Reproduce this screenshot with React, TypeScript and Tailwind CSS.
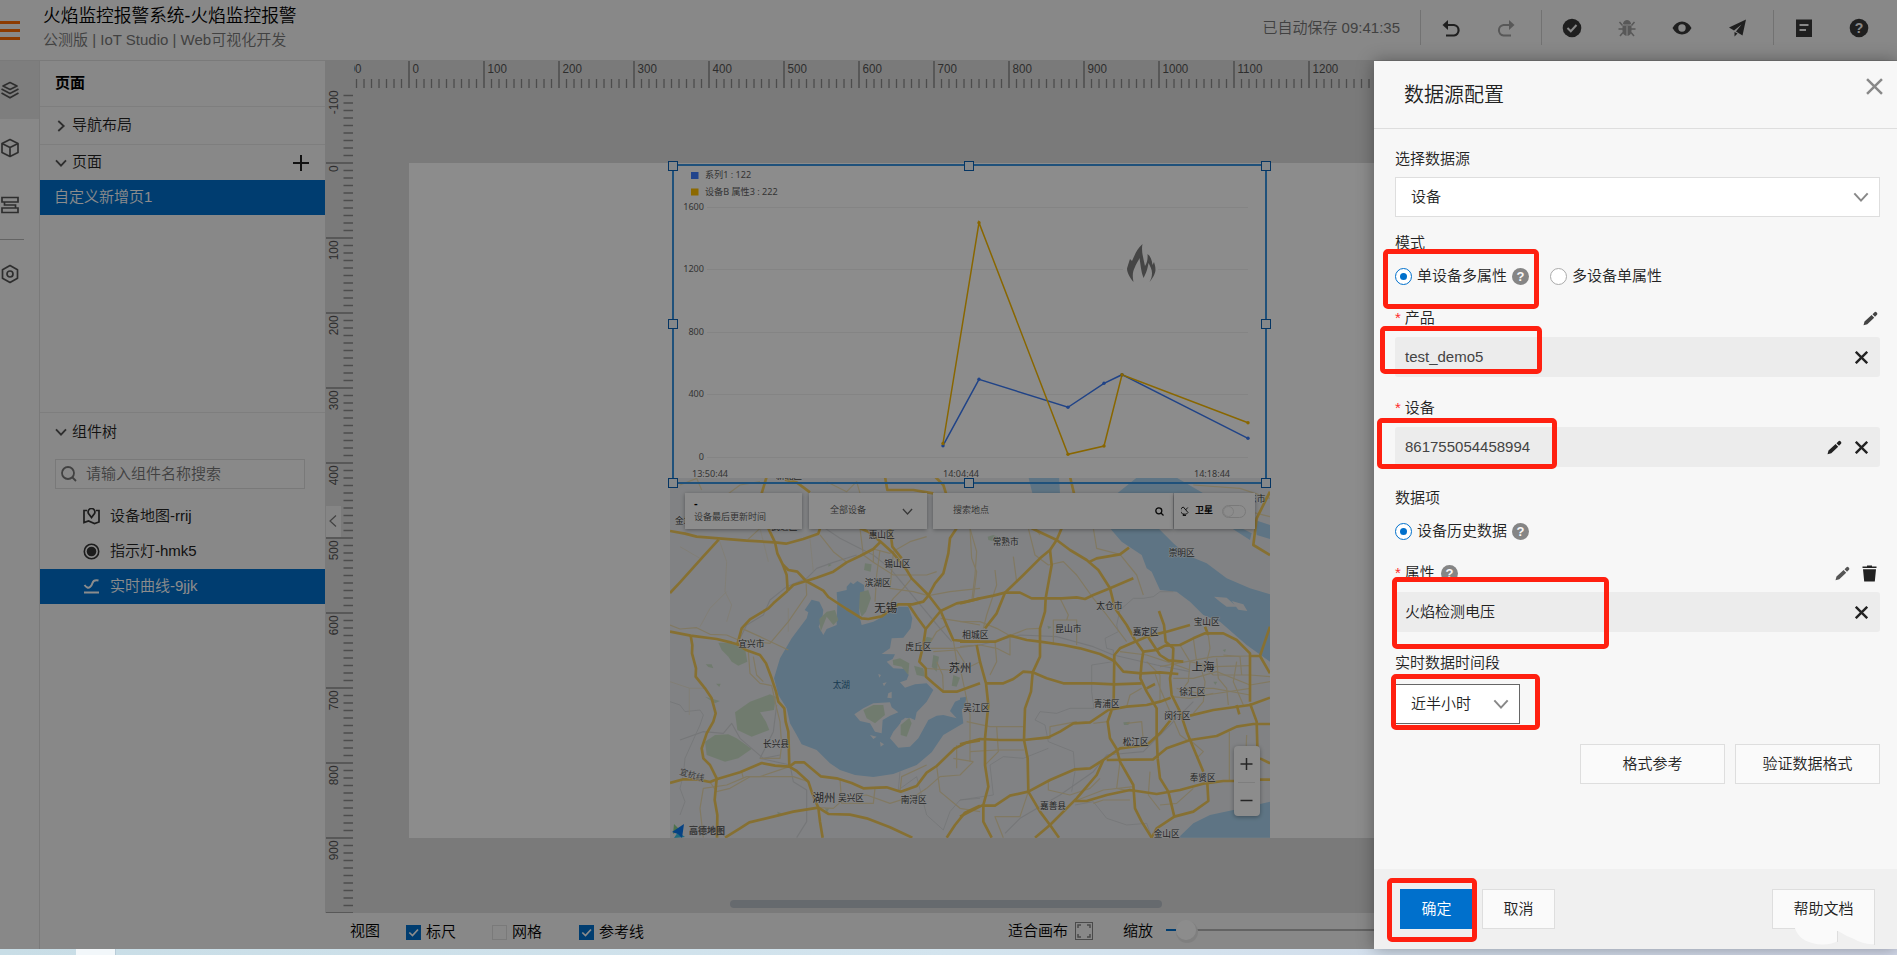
import React from "react";

const ROADS_WEST = [
  "M30 168L75 176L110 185L176 190L260 197L345 202L378 206L430 192L475 176L480 160",
  "M30 354L60 322L95 283L130 244L176 194",
  "M325 160L345 202L352 235L368 268L380 300L383 347",
  "M368 268L385 285L412 290L438 318L490 347L505 366L560 402L605 430L625 432L665 424L700 398L715 388L757 388L790 380L805 362",
  "M383 347L340 385L325 400L270 433L245 460L232 508",
  "M383 347L400 330L438 318L470 308L520 290L560 262L600 243L640 222L662 200L625 170L600 160",
  "M30 470L92 482L170 492L215 503L232 508L258 525L300 540L318 565L335 610L348 650L355 680L373 700L377 740L385 770L388 875",
  "M92 482L97 510L96 535L108 580L107 605L135 640L155 670L167 715L160 740L140 775L125 820L130 850L150 870L170 910L164 975L172 1020L171 1088",
  "M30 924L70 913L110 913L150 921L172 912L240 892L305 864L345 872L388 875L405 862L432 862L482 904L530 910L575 924L610 940L655 938L680 937L722 950L770 933L800 893L830 873L885 820L920 803L960 796",
  "M388 875L410 888L445 920L455 950L475 998L480 1040L488 1088",
  "M195 1088L240 1060L268 1042L340 1025L400 1010L475 998L505 1017L570 1019L620 1030L690 1057L757 1088",
  "M662 200L700 235L740 285L755 310L805 360L842 408L860 450L880 495L930 500L960 500",
  "M690 160L697 215L725 250",
  "M890 160L870 190L865 235L850 295L825 325L805 362",
  "M842 408L890 385L920 380L960 370",
  "M745 388L770 425L797 462L790 510L778 560L797 580L798 605L820 625L850 650L890 650L960 625",
  "M797 462L842 408",
  "M860 1088L885 1050L915 1013L960 992",
  "M320 5L305 55",
  "M375 14L410 22L450 52",
  "M675 5L682 45L760 45L820 55",
  "M825 5L850 30L858 55",
];

const ROADS_EAST = [
  "M0 385L60 370L100 362L135 353L180 353L215 370L255 370L305 370L350 367L375 372L400 360L450 340L520 310",
  "M75 460L110 415L135 353L190 300L240 250L270 225L290 195L305 160",
  "M215 160L290 195L330 225L380 255L415 285L450 340L465 400L500 450L525 495L550 530L545 560L541 610L560 650L590 700L590 780L593 850",
  "M385 262L410 250L480 238L507 218",
  "M270 225L275 270L257 370L255 410L240 460L240 500L240 545L218 592L213 650L195 700L192 795L203 850L205 950L240 1010L270 1050L297 1088",
  "M0 500L55 500L105 500L150 482L200 495L240 500L310 510L360 520L420 537L463 558L490 590L545 595L600 592L655 597",
  "M50 510L60 560L78 625L85 690L75 790L75 870L85 935L70 990L70 1040L95 1088",
  "M78 625L130 625L160 612L190 590L218 592L260 610L310 625L400 625L463 628L545 625",
  "M461 680L463 540L480 520L525 500L560 485L620 470L690 450",
  "M597 408L612 450L617 500L640 520L638 570L630 610L635 660L660 710L680 770L705 830L730 890",
  "M550 530L590 525L615 512L660 510L700 490L735 475L790 475L830 495L870 535L870 680",
  "M565 487L600 540L625 556L670 560",
  "M560 640L585 627M735 455L745 480",
  "M870 543L900 543L930 455M900 543L930 595",
  "M0 808L60 792L120 795L192 795L265 787L300 770L340 745L390 742L445 705L500 695L560 690L600 680L632 668",
  "M455 705L443 740L450 790L470 822L480 860L520 930L525 1000L545 1040L575 1088",
  "M690 722L760 705L870 690L930 668",
  "M870 685L890 740L893 850M830 690L838 718",
  "M440 855L580 853L620 820L690 795L770 783L830 755L880 747L930 747",
  "M632 735L600 775L560 810L480 820L430 855L390 880L345 883L270 915L205 950L150 962L105 992L65 992L0 1025",
  "M430 855L410 900L350 970L270 1050L225 1088",
  "M345 978L380 978L440 960L510 945L590 957L660 945L735 925L790 918L830 918M900 914L930 914",
  "M593 850L600 910L625 950L643 1025L700 1010L745 978L742 925",
  "M643 1025L590 1060L575 1088",
  "M930 50L890 130L880 210L930 240",
  "M900 850L930 865",
  "M330 5L342 55",
];

const MINOR_WEST = [
  "M60 30L110 10L125 45M200 60L240 30L300 20M500 20L560 50L590 20L600 55",
  "M30 450L60 462L110 458L150 478L200 480L235 495L330 505L385 440L440 360L438 318",
  "M245 460L300 485L385 525M260 197L300 160",
  "M265 530L270 595L300 625L335 632L350 700L360 740L365 810L360 850L300 850",
  "M280 545L290 600L310 620",
  "M388 875L300 905L260 905L200 930L130 940L120 1000L130 1088M250 910L245 890",
  "M150 921L170 950L210 940L270 905L400 905L445 920",
  "M475 998L520 1000L560 965L620 960L690 985L770 960L800 940",
  "M540 912L545 985L640 985L645 940M720 950L725 905L800 870",
  "M560 262L520 230L480 180M600 160L610 240L640 262L640 222L690 235L750 200L800 185",
  "M640 262L700 300L740 300L800 300L830 290M700 235L690 340L760 350L805 362",
  "M660 225L650 300L645 380M755 310L730 340L700 370L690 385",
  "M805 362L870 350L960 340M860 450L830 470L800 520L880 520L960 510",
  "M880 495L890 560L905 600L930 720L930 860M842 430L905 440L960 450",
  "M820 530L890 525L930 590M795 580L870 585L900 560M850 650L848 600L830 560",
  "M930 160L935 250L950 290L940 370M880 850L940 860M890 810L890 880",
  "M830 873L840 950L900 1000L960 1010M800 940L840 905L900 900L940 860",
];

const FAINT_WEST = [
  "M176 190L200 260L195 350L215 390L200 440M30 620L90 640L135 640M88 640L88 720M300 160L325 260M450 190L460 290",
  "M200 350L150 400L120 455M385 400L385 470M60 215L120 250",
];

const MINOR_EAST = [
  "M30 160L50 230L45 300L35 380M105 285L110 330L80 420L70 460",
  "M160 245L170 320M205 160L225 240L265 270L310 260L350 300L400 370L440 420L500 500",
  "M400 160L410 220L480 238L530 300L550 360M110 60L180 100L240 180",
  "M280 510L280 435L350 435L350 510M300 370L325 420L320 435",
  "M0 440L60 440L110 460L150 482L200 462L240 460",
  "M0 515L60 510L110 520L150 540L150 482M105 500L110 560L90 600",
  "M20 740L90 755L190 755M30 830L110 825L192 825M110 755L115 830L75 870",
  "M60 560L20 580M130 1088L105 1025L180 1025L205 950",
  "M192 795L270 790L270 755L350 740M265 915L265 945L330 960L390 940L420 910",
  "M443 740L400 745M500 745L545 740L550 800M480 860L470 940L520 950",
  "M480 530L560 540L620 560L690 585M560 560L600 600L600 680M585 595L600 640L660 780L680 795",
  "M600 575L680 560L760 545L870 543M660 510L690 560L685 620L670 640L760 640L870 660",
  "M700 490L710 560L760 600L870 600L930 605M745 480L750 520L740 560",
  "M640 610L700 610L770 590L870 630L930 620M720 570L735 620L730 680L700 715",
  "M770 550L775 610L800 640L805 690M830 560L820 620L850 690M790 540L840 545L845 600",
  "M690 560L760 575L870 572M650 640L740 660L870 640M635 665L690 670L760 655",
  "M808 770L808 915M860 780L855 900M690 795L730 830L710 850",
  "M345 978L430 945L520 935M400 985L430 975L510 975M600 990L650 985L700 940",
  "M500 695L510 660L545 640M570 890L565 960L600 1005",
  "M930 70L840 40L700 30M870 110L930 125",
];

const BORDERS_WEST = [
  "M30 680L60 690L75 710L120 705L130 720L120 750L75 850L70 900L60 940L75 980L60 1020",
  "M720 890L715 945L770 905L800 1020L850 1065L870 1010L900 975L960 970",
];
const BORDERS_EAST = [
  "M640 350L600 350L580 365L550 370L520 370L480 405L470 450L475 470L435 490L440 520L460 525L460 560L395 570L395 650L402 700",
  "M402 700L330 700L290 715L240 710L225 735L255 750L265 800L340 830L345 890L335 950",
  "M265 820L190 850L130 845L90 870L100 960L0 975M345 990L400 980L440 1030L500 1050L560 1045L575 1085",
];

const RAIL_WEST = [
  "M495 160L540 190L590 215L640 240L690 280L740 340L790 400L840 460L875 500",
  "M590 240L520 262L470 280L440 310L380 335L330 375L310 420L260 450L235 500",
  "M350 690L340 770L300 850L390 870L400 920L440 945L440 1040L410 1088",
  "M60 795L130 770L190 775L215 745L240 790L310 850L360 840",
];
const RAIL_EAST = [
  "M0 515L60 510L180 480L290 485L400 515L460 540L590 570L690 590",
  "M135 1075L180 1030L300 960L400 890L440 840L550 830L600 780L650 730L700 680",
];

const LAKE =
  "M455 374L478 380L490 405L487 430L476 455L490 480L500 462L530 450L532 380L530 352L560 345L560 335L572 322L580 328L592 318L612 330L614 370L597 400L600 430L605 450L640 440L660 430L690 405L715 395L745 395L757 430L752 460L730 488L695 490L690 520L665 537L705 538L698 552L680 560L700 580L735 582L746 600L740 615L720 622L735 638L765 628L800 625L820 645L800 680L770 712L765 735L735 728L700 770L690 790L715 818L750 815L775 790L805 735L830 722L850 720L890 730L870 708L885 680L920 665L905 700L910 745L850 780L815 832L770 870L700 897L640 906L585 900L540 885L510 865L470 825L425 808L410 780L390 745L380 700L355 660L342 610L360 550L395 490L440 430L445 412L434 405Z";

const ISLANDS =
  "M583 718L610 700L640 685L690 682L695 697L715 712L690 722L668 735L665 775L645 770L630 745L600 738ZM695 790L712 765L725 735L750 728L763 735L760 772L745 780L745 812L715 815ZM655 597L663 600L658 608ZM668 625L680 622L672 634ZM685 655L695 650L695 670L682 668ZM630 780L650 785L640 792ZM660 800L672 808L662 815Z";

const GREEN_WEST =
  "M175 503L215 503L255 520L262 560L235 572L215 560L205 545L185 525ZM225 712L270 680L330 658L348 665L342 705L300 712L318 740L328 765L275 785L232 765ZM135 800L165 780L205 778L230 790L262 812L275 822L235 850L195 860L140 840ZM137 568L155 568L160 580L145 576ZM168 626L182 626L178 636ZM135 665L180 678L165 685ZM478 432L500 410L525 405L535 435L520 450L500 425L482 470ZM600 352L625 345L633 370L618 410L605 425L597 400ZM615 265L635 268L632 290L612 285ZM698 555L720 550L748 565L745 600L725 575L700 570ZM762 572L790 580L795 605L770 600ZM820 540L837 545L830 590L815 575ZM880 600L900 608L890 635L875 632ZM800 485L820 490L805 505L790 505ZM610 705L640 690L670 690L675 720L645 745L620 730ZM722 750L748 728L755 745L740 785L722 780ZM495 1000L508 1000L500 1015ZM352 1010L365 1015L355 1025ZM505 265L515 270L505 275Z";

const GREEN_EAST =
  "M83 185L100 180L120 188L105 200L85 195ZM490 742L510 740L505 750L492 750ZM262 452L275 456L265 462ZM788 525L798 522L795 532ZM760 620L772 620L766 630Z";

const WATER_EAST =
  "M450 160L485 200L545 240L560 280L575 290L600 345L650 350L690 380L730 420L780 440L860 510L930 560L930 358L870 340L800 310L740 265L680 240L640 205L595 160ZM205 5L297 5L300 55L217 55ZM472 55L530 8L650 8L730 55ZM815 160L870 195L875 175L845 160ZM885 135L930 150L930 192L890 180ZM655 1088L700 1045L750 1020L820 1005L930 980L930 1088ZM0 668L20 665L12 700L0 705Z";

const MAP_LABELS: { x: number; y: number; t: string; big?: boolean; water?: boolean }[] = [
  { x: 387, y: 2, t: "新北区" },
  { x: 373, y: 155, t: "武进区" },
  { x: 665, y: 178, t: "惠山区" },
  { x: 712, y: 266, t: "锡山区" },
  { x: 653, y: 324, t: "滨湖区" },
  { x: 677, y: 397, t: "无锡", big: true },
  { x: 274, y: 507, t: "宜兴市" },
  { x: 775, y: 516, t: "虎丘区" },
  { x: 900, y: 579, t: "苏州", big: true },
  { x: 544, y: 628, t: "太湖", water: true },
  { x: 348, y: 806, t: "长兴县" },
  { x: 492, y: 967, t: "湖州", big: true },
  { x: 573, y: 968, t: "吴兴区" },
  { x: 761, y: 973, t: "南浔区" },
  { x: 946, y: 478, t: "相城区" },
  { x: 949, y: 698, t: "吴江区" },
  { x: 1037, y: 201, t: "常熟市" },
  { x: 1565, y: 232, t: "崇明区" },
  { x: 1348, y: 392, t: "太仓市" },
  { x: 1225, y: 462, t: "昆山市" },
  { x: 1457, y: 471, t: "嘉定区" },
  { x: 1640, y: 441, t: "宝山区" },
  { x: 1629, y: 575, t: "上海", big: true },
  { x: 1597, y: 651, t: "徐汇区" },
  { x: 1340, y: 687, t: "青浦区" },
  { x: 1552, y: 723, t: "闵行区" },
  { x: 1427, y: 799, t: "松江区" },
  { x: 1628, y: 909, t: "奉贤区" },
  { x: 1179, y: 993, t: "嘉善县" },
  { x: 1520, y: 1076, t: "金山区" },
  { x: 84, y: 138, t: "金坛区" },
  { x: 1777, y: 70, t: "启东市" },
];

function Lines({ d, stroke, width }: { d: string[]; stroke: string; width: number }) {
  return (
    <g fill="none" stroke={stroke} strokeWidth={width} strokeLinejoin="round" strokeLinecap="butt">
      {d.map((p) => (
        <path key={p} d={p} />
      ))}
    </g>
  );
}

function MapDrawing() {
  const west = "translate(-10 -3) scale(0.33333)";
  const east = "translate(290 -3) scale(0.33333)";
  return (
    <svg width="600" height="360" viewBox="0 0 600 360" className="block">
      <rect width="600" height="360" fill="#ebedf0" />
      <g transform={west}>
        <path d={LAKE} fill="#abd4f0" />
        <path d={ISLANDS} fill="#ebedf0" />
        <path d={GREEN_WEST} fill="#cde1c9" />
      </g>
      <g transform={east}>
        <path d={WATER_EAST} fill="#abd4f0" />
        <path d="M762 365L800 368L830 395L800 395L780 380ZM815 378L850 388L862 408L835 404Z" fill="#ebedf0" />
        <path d={GREEN_EAST} fill="#cde1c9" />
      </g>
      <g transform={west}>
        <Lines d={BORDERS_WEST} stroke="#cfd1d5" width={2} />
        <Lines d={RAIL_WEST} stroke="#d6d8db" width={3.5} />
        <Lines d={FAINT_WEST} stroke="#ebe5d2" width={2.5} />
        <Lines d={MINOR_WEST} stroke="#ebdcb2" width={3.6} />
      </g>
      <g transform={east}>
        <Lines d={BORDERS_EAST} stroke="#cfd1d5" width={2} />
        <Lines d={RAIL_EAST} stroke="#d6d8db" width={3.5} />
        <Lines d={MINOR_EAST} stroke="#ebdcb2" width={3.6} />
      </g>
      <g transform={west}>
        <Lines d={ROADS_WEST} stroke="#f5cc5c" width={8} />
      </g>
      <g transform={east}>
        <Lines d={ROADS_EAST} stroke="#f5cc5c" width={8} />
      </g>
      <g
        textAnchor="middle"
        fontFamily="'Noto Sans CJK SC', sans-serif"
        fontWeight="400"
        stroke="#f5f6f8"
        strokeOpacity="0.7"
        paintOrder="stroke"
      >
        {MAP_LABELS.map((l) => (
          <text
            key={l.t + l.x}
            x={l.x / 3 - 10}
            y={l.y / 3 - 3 + (l.big ? 4.2 : 3.3)}
            fontSize={l.big ? 11.5 : 8.7}
            fill={l.water ? "#2e6a94" : "#444"}
            strokeWidth={l.water ? 0 : 1.4}
          >
            {l.t}
          </text>
        ))}
        <text x="22" y="300" fontSize="8.5" fill="#6b6b6b" strokeWidth="1.4" transform="rotate(16 22 297)">
          宜杭线
        </text>
      </g>
      <path d="M4 346l6 6-7 4z" fill="#8fd08a" />
      <path d="M8 354l7 5-11 1z" fill="#3cc3e8" />
      <path d="M14 346L2 354l6 2 4 4z" fill="#0a78f0" />
      <text
        x="37"
        y="355.5"
        textAnchor="middle"
        fontSize="9"
        fontWeight="700"
        fill="#666"
        fontFamily="'Noto Sans CJK SC', sans-serif"
      >
        高德地图
      </text>
    </svg>
  );
}

const Y_TICKS = [
  { v: "1600", y: 41.5 },
  { v: "1200", y: 103.5 },
  { v: "800", y: 166.5 },
  { v: "400", y: 228.5 },
  { v: "0", y: 291.5 },
];

const BLUE_POINTS: [number, number][] = [
  [273, 279.7], [309, 213.3], [398, 241.3], [434, 217.3], [452, 208.7], [578, 272.3],
];
const GOLD_POINTS: [number, number][] = [
  [273, 277.5], [309, 56.7], [398, 288.3], [434, 280], [452, 208.7], [578, 256.7],
];

function Chart() {
  const join = (pts: [number, number][]) => pts.map((p) => p.join(",")).join(" ");
  return (
    <svg
      width="600"
      height="312"
      viewBox="0 0 600 312"
      className="block"
      fontFamily="'Noto Sans', 'Noto Sans CJK SC', sans-serif"
      fontSize="9.1"
      fontWeight="400"
      fill="#5f5f5f"
    >
      <rect x="21" y="6" width="7.5" height="7" fill="#3c7cff" />
      <text x="35" y="11.7">系列1 : 122</text>
      <rect x="21" y="22.500" width="7.5" height="7" fill="#ffbf00" />
      <text x="35" y="28.7">设备B 属性3 : 222</text>
      {Y_TICKS.map((t) => (
        <g key={t.v}>
          <line x1="37" x2="578" y1={t.y} y2={t.y} stroke="#f0f0f0" strokeWidth="1" />
          <text x="34" y={t.y + 2.5} textAnchor="end">{t.v}</text>
        </g>
      ))}
      <text x="40" y="310.500" textAnchor="middle">13:50:44</text>
      <text x="291" y="310.500" textAnchor="middle">14:04:44</text>
      <text x="542" y="310.500" textAnchor="middle">14:18:44</text>
      <polyline points={join(BLUE_POINTS)} fill="none" stroke="#3b7bf6" strokeWidth="1.5" />
      <polyline points={join(GOLD_POINTS)} fill="none" stroke="#f9bb00" strokeWidth="1.5" />
      {BLUE_POINTS.map(([x, y]) => (
        <circle key={x} cx={x} cy={y} r="1.7" fill="#3b7bf6" />
      ))}
      {GOLD_POINTS.map(([x, y]) => (
        <circle key={x} cx={x} cy={y} r="1.7" fill="#f9bb00" />
      ))}
      <rect x="453" y="75" width="35" height="40" fill="#fff" />
      <path
        fill="#7f7f7f"
        d="M472.500 79C466 85 464.500 91 462 96L460 94C458 100 457 103 457 104C457 107 460 113 463.500 117C462 110 463 106 465 102C467 97 468.500 96 469.500 93C470.500 99 471 107 473.500 113C477 107 478 101 478.500 98C480 101 482 104 482 108C482 112 481 114.500 479.500 117C483 113 485.500 108 485.500 105C485.500 101 484.500 99 484 97L482.500 100C482 95 480.500 91 477.500 89C478 94 477 98 475 101C473.500 94 471 86 472.500 79Z"
        transform="translate(0 -1)"
      />
    </svg>
  );
}

function HRuler() {
  const ticks = Array.from({ length: 140 }, (_, i) => i - 7);
  return (
    <svg width="1543" height="28" viewBox="354 61 1543 28" className="block" fontFamily="'Liberation Sans', sans-serif" fontSize="13.500" fill="#555">
      {ticks.map((i) => {
        const x = 409 + i * 7.5;
        const major = i % 10 === 0;
        return (
          <g key={i}>
            <line x1={x} x2={x} y1={major ? 61 : 79} y2={88} stroke="#8c8c8c" strokeWidth={major ? 1.5 : 1.3} />
            {major && (
              <text transform={`translate(${x + 3.5} 73) scale(0.86 1)`}>
                {i * 10}
              </text>
            )}
          </g>
        );
      })}
      <text transform="translate(361.500 73) scale(0.86 1)" textAnchor="end">-100</text>
    </svg>
  );
}

function VRuler() {
  const ticks = Array.from({ length: 110 }, (_, i) => i - 9);
  return (
    <svg width="28" height="824" viewBox="326 89 28 824" className="block" fontFamily="'Liberation Sans', sans-serif" fontSize="13.500" fill="#555">
      {ticks.map((i) => {
        const y = 163 + i * 7.5;
        const major = i % 10 === 0;
        return (
          <g key={i}>
            <line x1={major ? 326 : 343.5} x2={353} y1={y} y2={y} stroke="#8c8c8c" strokeWidth={1.5} />
            {major && (
              <text transform={`translate(338 ${y + 2.5}) rotate(-90) scale(0.88 1)`} textAnchor="end">
                {i * 10}
              </text>
            )}
          </g>
        );
      })}
      <text transform="translate(338 90.500) rotate(-90) scale(0.88 1)" textAnchor="end">-100</text>
    </svg>
  );
}

function Chevron({ className = "", w = 12, sw = 1.8 }: { className?: string; w?: number; sw?: number }) {
  return (
    <svg className={className} width={w} height={w} viewBox="0 0 12 12" fill="none" stroke="currentColor" strokeWidth={(sw * 12) / w}>
      <path d="M1 3.300L6 8.700L11 3.300" />
    </svg>
  );
}

function Pencil({ className = "" }: { className?: string }) {
  return (
    <svg className={className} width="15" height="15" viewBox="0 0 15 15" fill="currentColor">
      <path d="M0.500 14.300L1.500 10.500L8.600 4L11.200 6.700L4.300 13.200ZM9.500 3.200L11.800 1Q12.700 0.500 13.500 1.300L14.200 2.200Q14.700 3 14 3.700L12 5.800Z" />
    </svg>
  );
}

function Cross({ className = "", size = 13, sw = 2.4 }: { className?: string; size?: number; sw?: number }) {
  return (
    <svg className={className} width={size} height={size} viewBox="0 0 13 13" fill="none" stroke="currentColor" strokeWidth={sw}>
      <path d="M0.800 0.800L12.200 12.200M12.200 0.800L0.800 12.200" />
    </svg>
  );
}

function Help() {
  return (
    <span className="flex h-[17px] w-[17px] items-center justify-center rounded-full bg-[#858585] font-['Liberation_Sans'] text-[13px] leading-none font-bold text-[#f7f7f7]">
      ?
    </span>
  );
}

function Radio({ on }: { on?: boolean }) {
  return (
    <span
      className={
        on
          ? "flex h-[17px] w-[17px] items-center justify-center rounded-full border border-[#0070cc] bg-white"
          : "flex h-[17px] w-[17px] items-center justify-center rounded-full border border-[#aaa] bg-white"
      }
    >
      {on && <span className="h-[7px] w-[7px] rounded-full bg-[#0070cc]" />}
    </span>
  );
}

function Check({ on, label, className }: { on?: boolean; label: string; className: string }) {
  return (
    <span className={className}>
      {on ? (
        <svg width="15" height="15" viewBox="0 0 15 15">
          <rect width="15" height="15" fill="#0070cc" />
          <path d="M3.300 7.500L6.500 10.500L12 4.500" fill="none" stroke="#fff" strokeWidth="1.700" />
        </svg>
      ) : (
        <span className="h-[15px] w-[15px] border border-[#dedede]" />
      )}
      {label}
    </span>
  );
}

function Header() {
  return (
    <header className="flex h-[61px] shrink-0 items-center border-b border-[#dedede] bg-[#f7f7f7]">
      <div className="flex w-5 flex-col gap-[5px]">
        <span className="h-[3px] bg-[#ff6a00]" />
        <span className="h-[3px] bg-[#ff6a00]" />
        <span className="h-[3px] bg-[#ff6a00]" />
      </div>
      <div className="ml-[23px] flex h-full flex-col pt-[3px]">
        <div className="text-[17.700px] leading-[26px] text-black">火焰监控报警系统-火焰监控报警</div>
        <div className="text-[15px] leading-[22px] text-[#777]">公测版 | IoT Studio | Web可视化开发</div>
      </div>
      <div className="ml-auto flex h-full items-start pr-[28px]">
        <div className="pt-[17px] text-[15px] leading-[22px] text-[#777]">已自动保存 09:41:35</div>
        <svg width="449" height="56" viewBox="1420 0 449 56" className="ml-[20px]" fill="#3a3a3a">
          <path d="M1420.500 10V45M1541.500 10V45M1773.500 10V45" stroke="#d0d0d0" />
          <path d="M1445 25H1454A5.300 5.300 0 0 1 1454 35.500H1446" fill="none" stroke="#3a3a3a" strokeWidth="2.200" />
          <path d="M1442.500 25L1448 20V30Z" />
          <path d="M1512 25H1503.500A5.300 5.300 0 0 0 1503.500 35.500H1511" fill="none" stroke="#a0a0a0" strokeWidth="2" />
          <path d="M1514.500 25L1509 20V30Z" fill="#a0a0a0" />
          <circle cx="1572" cy="28" r="9.300" />
          <path d="M1567.500 28L1570.800 31.200L1576.500 25" fill="none" stroke="#f7f7f7" strokeWidth="2" />
          <g fill="#a0a0a0" stroke="#a0a0a0">
            <path d="M1623.500 24A3.500 3.500 0 0 1 1630.500 24Z" />
            <path d="M1622.500 25.500H1631.500V31A4.500 5 0 0 1 1622.500 31Z" stroke="none" />
            <path d="M1619.500 22L1622.500 25.500M1634.500 22L1631.500 25.500M1618.500 29H1635.500M1620 36L1623 32.500M1634 36L1631 32.500" strokeWidth="1.500" />
            <path d="M1627 26V36" stroke="#f7f7f7" />
          </g>
          <path fillRule="evenodd" d="M1672.500 28Q1676 21.500 1682 21.500T1691.500 28Q1688 34.500 1682 34.500T1672.500 28ZM1682 24.300A3.700 3.700 0 1 0 1682 31.700A3.700 3.700 0 1 0 1682 24.300Z" />
          <path d="M1746 19.500L1729 27.500L1734 30.500L1741.500 24.500L1736 31.500L1742.500 35.500ZM1734.500 32V36.500L1737.500 33.500Z" />
          <path fillRule="evenodd" d="M1796 19.500H1812V37H1796ZM1799.500 24V26H1808.500V24ZM1799.500 29V31H1806V29Z" />
          <circle cx="1859" cy="28" r="9.300" />
          <text x="1859" y="33" fontSize="14" fontWeight="700" textAnchor="middle" fill="#f7f7f7" fontFamily="'Liberation Sans'">?</text>
        </svg>
      </div>
    </header>
  );
}

function Rail() {
  return (
    <nav className="flex w-10 shrink-0 flex-col border-r border-[#dedede] bg-[#f7f7f7] text-[#555]">
      <div className="flex h-[58px] items-center bg-[#e6e6e6]">
        <svg width="20" height="20" viewBox="0 0 20 20" fill="none" stroke="currentColor" strokeWidth="1.700" strokeLinejoin="round">
          <path d="M10 2.500L17 6L10 9.500L3 6Z" />
          <path d="M1.500 9L10 13.500L18.500 9M1.500 13L10 17.800L18.500 13" />
        </svg>
      </div>
      <div className="flex h-[57px] items-center">
        <svg width="20" height="20" viewBox="0 0 20 20" fill="none" stroke="currentColor" strokeWidth="1.700" strokeLinejoin="round">
          <path d="M10 1.500L18 5.500V14.500L10 18.500L2 14.500V5.500ZM2 5.500L10 9.500L18 5.500M10 9.500V18.500" />
        </svg>
      </div>
      <div className="flex h-[58px] items-center">
        <svg width="20" height="20" viewBox="0 0 20 20" fill="none" stroke="currentColor" strokeWidth="1.700">
          <path d="M2 2.500H18V7H2ZM4.500 7V10H15.500V13M2 13H18V17.500H2Z" />
        </svg>
      </div>
      <div className="mt-[5px] h-px w-6 bg-[#b4b4b4]" />
      <div className="flex h-[68px] items-center">
        <svg width="20" height="20" viewBox="0 0 20 20" fill="none" stroke="currentColor" strokeWidth="1.700" strokeLinejoin="round">
          <path d="M10 1.500L17.500 5.700V14.300L10 18.500L2.500 14.300V5.700Z" />
          <circle cx="10" cy="10" r="3" />
        </svg>
      </div>
    </nav>
  );
}

function SidePanel() {
  return (
    <aside className="flex w-[285px] shrink-0 flex-col bg-[#f7f7f7] text-[15px] text-[#222]">
      <div className="flex h-[46px] items-center border-b border-[#e6e6e6] pl-[15px] font-bold text-black">页面</div>
      <div className="flex h-[38px] items-center border-b border-[#e6e6e6] pl-[15px]">
        <Chevron className="-rotate-90 text-[#555]" />
        <span className="ml-[5px]">导航布局</span>
      </div>
      <div className="flex h-[35px] items-center pl-[15px]">
        <Chevron className="text-[#555]" />
        <span className="ml-[5px]">页面</span>
        <svg className="mr-4 ml-auto" width="16" height="16" viewBox="0 0 16 16" stroke="#222" strokeWidth="2">
          <path d="M8 0V16M0 8H16" />
        </svg>
      </div>
      <div className="flex h-[35px] items-center bg-[#0070cc] pl-[14px] text-white">自定义新增页1</div>
      <div className="mt-[197px] flex h-[39px] items-center border-t border-[#e6e6e6] pl-[15px]">
        <Chevron className="text-[#555]" />
        <span className="ml-[5px]">组件树</span>
      </div>
      <div className="mx-[15px] mt-2 mr-5 flex h-[30px] items-center border border-[#dcdcdc] bg-[#fafafa] pl-[5px] text-[#777]">
        <svg width="16" height="16" viewBox="0 0 16 16" fill="none" stroke="#777" strokeWidth="1.800">
          <circle cx="7" cy="7" r="6" />
          <path d="M11.500 11.500L15 15" />
        </svg>
        <span className="ml-[9px]">请输入组件名称搜索</span>
      </div>
      <div className="mt-[10px] flex h-[35px] items-center pl-[43px]">
        <svg width="17" height="17" viewBox="0 0 17 17" fill="none" stroke="#333" strokeWidth="1.700">
          <path d="M4 2.500H1V14.500L5.500 13L11.500 15.500L16 14V2.500H13" />
          <path d="M8.500 9.500L5.500 5.500A3.400 3.400 0 1 1 11.500 5.500Z" />
        </svg>
        <span className="ml-[10px]">设备地图-rrij</span>
      </div>
      <div className="flex h-[35px] items-center pl-[43px]">
        <svg width="17" height="17" viewBox="0 0 17 17">
          <circle cx="8.500" cy="8.500" r="7.200" fill="none" stroke="#333" strokeWidth="1.600" />
          <circle cx="8.500" cy="8.500" r="4.800" fill="#333" />
        </svg>
        <span className="ml-[10px]">指示灯-hmk5</span>
      </div>
      <div className="flex h-[35px] items-center bg-[#0070cc] pl-[43px] text-white">
        <svg width="17" height="17" viewBox="0 0 17 17" fill="none" stroke="#fff" strokeWidth="2">
          <path d="M1.500 7Q4.500 11 7 9Q8.800 7.500 9.500 5Q10.500 1.500 15.500 2.500M1 14.500H16" />
        </svg>
        <span className="ml-[10px]">实时曲线-9jjk</span>
      </div>
    </aside>
  );
}

function Handle({ className }: { className: string }) {
  return <span className={"absolute h-[10px] w-[10px] border border-[#0a62b4] bg-[#f3f7fb] " + className} />;
}

function PageCanvas() {
  return (
    <div className="relative mt-[74px] ml-[55px] h-[675px] w-[1488px] bg-white">
      <div className="ml-[261px] flex w-[600px] flex-col">
        <div className="h-[315px] pt-[3px]">
          <Chart />
        </div>
        <div className="relative h-[360px]">
          <MapDrawing />
          <div className="absolute top-[15px] left-[15px] flex h-9 w-[570px] text-[9px] text-[#555]">
            <div className="flex w-[117px] flex-col bg-white pl-[9px] shadow-[0_1px_4px_rgba(0,0,0,0.35)]">
              <span className="h-[17px] pt-[4px] text-[11px] leading-[13px] font-bold text-black">-</span>
              <span className="leading-[14px]">设备最后更新时间</span>
            </div>
            <div className="ml-[7px] flex w-[118px] items-center bg-white pr-[14px] pl-[21px] shadow-[0_1px_4px_rgba(0,0,0,0.35)]">
              全部设备
              <Chevron className="ml-auto text-[#666]" w={11} sw={1.3} />
            </div>
            <div className="ml-[6px] flex w-[240px] items-center bg-white pr-[9px] pl-[20px] shadow-[0_1px_4px_rgba(0,0,0,0.35)]">
              搜索地点
              <svg className="ml-auto" width="9" height="9" viewBox="0 0 9 9" fill="none" stroke="#111" strokeWidth="1.300">
                <circle cx="3.800" cy="3.800" r="3" />
                <path d="M6 6L8.500 8.500" />
              </svg>
            </div>
            <div className="ml-px flex w-[81px] items-center bg-white pl-[7px] text-[#111] shadow-[0_1px_4px_rgba(0,0,0,0.35)]">
              <svg width="8" height="10" viewBox="0 0 8 10" fill="none" stroke="#222" strokeWidth="1">
                <path d="M2.300 1A4 3.800 0 1 0 7 6.500ZM4.500 4L6.800 1.500M3 7.500L2 9.500H5" />
              </svg>
              <span className="ml-[6px] font-bold">卫星</span>
              <span className="ml-[9px] flex h-[13px] w-6 rounded-full border border-[#ddd]">
                <span className="h-[11px] w-[11px] rounded-full border border-[#e6e6e6] bg-white" />
              </span>
            </div>
          </div>
          <div className="absolute top-[268px] left-[564px] flex h-[70px] w-[26px] flex-col items-center rounded-sm bg-white shadow-[0_1px_4px_rgba(0,0,0,0.35)]">
            <svg width="26" height="70" viewBox="0 0 26 70" stroke="#444" strokeWidth="1.500">
              <path d="M12.500 12V24M6.500 18H18.500M6.500 54.500H18.500" />
              <path d="M4 36.500H21" stroke="#e6e6e6" strokeWidth="1" />
            </svg>
          </div>
        </div>
      </div>
      <div className="absolute top-[1px] left-[263px] h-[320px] w-[595px] border-2 border-[#3a94e0]">
        <Handle className="-top-[5px] -left-[6px]" />
        <Handle className="-top-[5px] left-[290px]" />
        <Handle className="-top-[5px] -right-[6px]" />
        <Handle className="top-[153px] -left-[6px]" />
        <Handle className="top-[153px] -right-[6px]" />
        <Handle className="-bottom-[6px] -left-[6px]" />
        <Handle className="-bottom-[6px] left-[290px]" />
        <Handle className="-right-[6px] -bottom-[6px]" />
      </div>
    </div>
  );
}

function Workspace() {
  return (
    <main className="flex min-w-0 flex-1 flex-col bg-[#dedede]">
      <div className="flex h-[28px] pl-[29px]">
        <HRuler />
      </div>
      <div className="relative flex h-[824px] overflow-hidden pl-px">
        <div className="shrink-0">
          <VRuler />
        </div>
        <div className="min-w-0 flex-1 overflow-hidden">
          <PageCanvas />
        </div>
        <div className="absolute top-[417px] left-px flex h-[31px] w-[15px] items-center justify-center bg-[#f2f2f2]">
          <svg className="mr-[2px] mb-[2px]" width="8" height="12" viewBox="0 0 8 12" fill="none" stroke="#777" strokeWidth="1.200">
            <path d="M7 0.500L1 6L7 11.500" />
          </svg>
        </div>
        <div className="absolute top-[811px] left-[405px] h-2 w-[432px] rounded-full bg-[#bac1c9]" />
      </div>
      <div className="flex h-9 items-center bg-[#f7f7f7] text-[15px] text-black">
        <span className="ml-[25px] w-[56px]">视图</span>
        <Check on label="标尺" className="flex w-[86px] items-center gap-[5px] pt-[2px]" />
        <Check label="网格" className="flex w-[87px] items-center gap-[5px] pt-[2px]" />
        <Check on label="参考线" className="flex w-[429px] items-center gap-[5px] pt-[2px]" />
        <span>适合画布</span>
        <svg className="ml-[7px]" width="18" height="18" viewBox="0 0 18 18" fill="none" stroke="#888">
          <rect x="0.500" y="0.500" width="17" height="17" />
          <path d="M3 6V3H6M12 3H15V6M15 12V15H12M6 15H3V12" strokeWidth="1.500" />
        </svg>
        <span className="ml-[30px]">缩放</span>
        <svg className="ml-[13px]" width="400" height="30" viewBox="0 0 400 30">
          <path d="M10 14H400" stroke="#b4b4b4" strokeWidth="2" />
          <path d="M0 14H12" stroke="#0070cc" strokeWidth="2" />
          <circle cx="21" cy="16" r="11" fill="#e8e8e8" />
          <circle cx="20" cy="14" r="10" fill="#fff" />
        </svg>
      </div>
    </main>
  );
}

function Mark({ className }: { className: string }) {
  return <div className={"absolute rounded-[5px] border-[5px] border-[#ff2010] " + className} />;
}

function Required({ children }: { children: React.ReactNode }) {
  return (
    <span className="flex items-center">
      <span className="mr-[4px] font-['Liberation_Sans'] text-[15px] text-[#ff2b2b]">*</span>
      {children}
    </span>
  );
}

function Drawer() {
  return (
    <section className="absolute top-[61px] right-0 flex h-[888px] w-[523px] flex-col bg-[#f7f7f7] text-[15px] text-[#222] shadow-[0_0_16px_rgba(0,0,0,0.35)]">
      <div className="flex h-[68px] items-center border-b border-[#dedede] pr-[14px] pl-[30px]">
        <h2 className="text-[20px]">数据源配置</h2>
        <Cross className="mb-[16px] ml-auto text-[#888]" size={17} sw={1.9} />
      </div>
      <div className="flex flex-1 flex-col pr-[17px] pl-[21px]">
        <div className="mt-[19px] flex h-[22px] items-center">选择数据源</div>
        <div className="mt-[7px] flex h-10 items-center border border-[#dedede] bg-white pr-[10px] pl-[15px]">
          设备
          <Chevron className="ml-auto text-[#888]" w={16} sw={2} />
        </div>
        <div className="mt-[15px] flex h-[22px] items-center">模式</div>
        <div className="mt-[11px] flex h-[22px] items-center">
          <Radio on />
          <span className="mr-[5px] ml-[5px]">单设备多属性</span>
          <Help />
          <span className="w-[21px]" />
          <Radio />
          <span className="ml-[5px]">多设备单属性</span>
        </div>
        <div className="mt-[20px] flex h-[22px] items-center pr-[2px]">
          <Required>产品</Required>
          <Pencil className="ml-auto text-[#444]" />
        </div>
        <div className="mt-[8px] flex h-10 items-center rounded-[3px] bg-[#ececec] pr-[12px] pl-[10px] text-[#444]">
          test_demo5
          <Cross className="ml-auto text-[#222]" />
        </div>
        <div className="mt-[20px] flex h-[22px] items-center">
          <Required>设备</Required>
        </div>
        <div className="mt-[8px] flex h-10 items-center rounded-[3px] bg-[#ececec] pr-[12px] pl-[10px] text-[#444]">
          861755054458994
          <Pencil className="mr-[13px] ml-auto text-[#222]" />
          <Cross className="text-[#222]" />
        </div>
        <div className="mt-[20px] flex h-[22px] items-center">数据项</div>
        <div className="mt-[11px] flex h-[22px] items-center">
          <Radio on />
          <span className="mr-[5px] ml-[5px]">设备历史数据</span>
          <Help />
        </div>
        <div className="mt-[20px] flex h-[22px] items-center pr-[3px]">
          <Required>属性</Required>
          <span className="ml-[6px]">
            <Help />
          </span>
          <Pencil className="mr-[12px] ml-auto text-[#555]" />
          <svg width="15" height="17" viewBox="0 0 15 17" fill="#222">
            <path d="M0.500 1.500H5V0.500H10V1.500H14.500V3H0.500ZM1 4.200H14L12.800 16.500H2.200Z" />
          </svg>
        </div>
        <div className="mt-[8px] flex h-10 items-center rounded-[3px] bg-[#ececec] pr-[12px] pl-[10px]">
          火焰检测电压
          <Cross className="ml-auto text-[#222]" />
        </div>
        <div className="mt-[20px] flex h-[22px] items-center">实时数据时间段</div>
        <div className="mt-[10px] flex h-10 w-[125px] items-center border border-[#666] bg-white pr-[10px] pl-[15px]">
          近半小时
          <Chevron className="ml-auto text-[#888]" w={16} sw={2} />
        </div>
        <div className="mt-[20px] flex justify-end gap-[10px]">
          <button className="h-10 w-[145px] border border-[#dedede] bg-[#fafafa]">格式参考</button>
          <button className="h-10 w-[145px] border border-[#dedede] bg-[#fafafa]">验证数据格式</button>
        </div>
      </div>
      <div className="flex h-20 items-start bg-[#f0f0f0] pt-[20px] pr-[22px] pl-[26px]">
        <button className="h-10 w-[73px] bg-[#0070cc] text-white">确定</button>
        <button className="ml-[9px] h-10 w-[73px] border border-[#dedede] bg-[#fafafa]">取消</button>
        <button className="ml-auto h-10 w-[103px] border border-[#dedede] bg-[#fafafa]">帮助文档</button>
      </div>
      <svg className="absolute top-[864px] right-[21px] blur-[0.5px]" width="84" height="24" viewBox="0 0 84 24">
        <path d="M2 0H83V19Q72 20 62 14Q54 11 46 6V16Q34 22 20 18Q5 14 2 0Z" fill="#fafafa" />
        <path d="M45.500 6V17M82.500 0V20" stroke="#dedede" />
      </svg>
      <Mark className="top-[188px] left-[9px] h-[60px] w-[156px]" />
      <Mark className="top-[265px] left-[6px] h-[48px] w-[162px]" />
      <Mark className="top-[357px] left-[3px] h-[51px] w-[180px]" />
      <Mark className="top-[516px] left-[18px] h-[72px] w-[217px]" />
      <Mark className="top-[613px] left-[17px] h-[56px] w-[149px]" />
      <Mark className="top-[817px] left-[13px] h-[64px] w-[90px]" />
    </section>
  );
}

export default function App() {
  return (
    <div className="relative flex h-[955px] w-[1897px] flex-col overflow-hidden bg-[#f7f7f7] font-['Liberation_Sans','Noto_Sans_CJK_SC',sans-serif] font-[350]">
      <Header />
      <div className="flex h-[888px] shrink-0">
        <Rail />
        <SidePanel />
        <Workspace />
      </div>
      <div className="flex h-[6px] shrink-0 bg-linear-to-r from-[#c8dde6] via-[#d3e4ee] to-[#d3d9ea] pl-[76px]">
        <span className="w-10 border-r border-[#b8ccd8] bg-[#f2f7fa]" />
      </div>
      <div className="absolute top-0 left-0 h-[949px] w-full bg-black/45" />
      <Drawer />
    </div>
  );
}
